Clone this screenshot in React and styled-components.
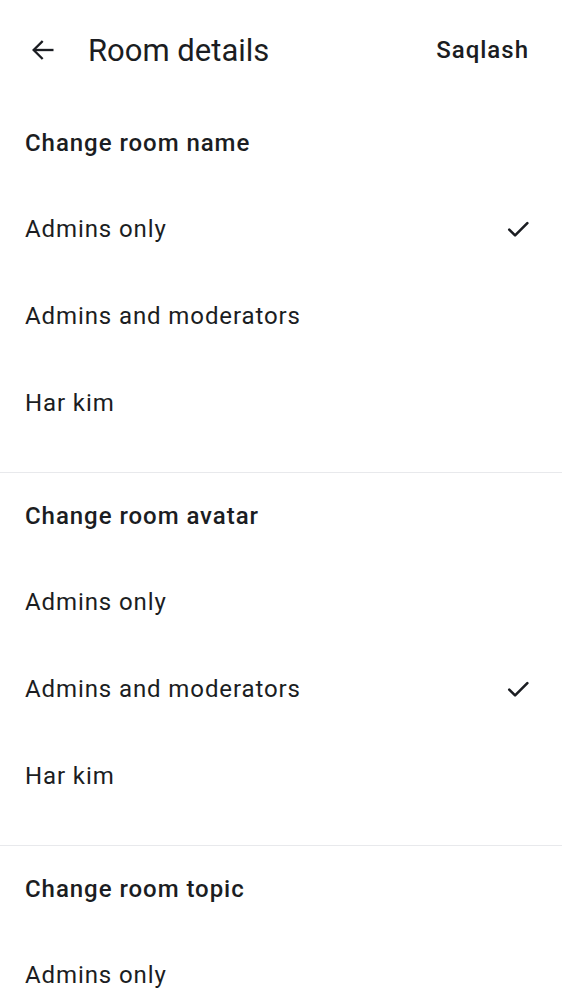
import React from "react";
import styled, { createGlobalStyle } from "styled-components";

const Global = createGlobalStyle`
  html, body { margin: 0; padding: 0; background: #ffffff; }
  body { font-family: Roboto, "Noto Sans", sans-serif; color: #1b1d22; }
`;

const Page = styled.div`
  width: 562px;
  height: 1000px;
  overflow: hidden;
  display: flex;
  flex-direction: column;
`;

const TopBar = styled.header`
  height: 100px;
  flex-shrink: 0;
  display: flex;
  align-items: center;
  padding: 0 33px 0 26px;
  box-sizing: border-box;
`;

const BackButton = styled.button`
  border: none;
  background: none;
  padding: 0;
  width: 34px;
  height: 34px;
  display: flex;
  align-items: center;
  justify-content: center;
  color: #1b1d22;
  margin-right: 28px;
`;

const Title = styled.h1`
  flex: 1;
  margin: 0;
  font-size: 31px;
  font-weight: 400;
  color: #1b1d22;
`;

const Action = styled.span`
  font-size: 24px;
  font-weight: 500;
  letter-spacing: 1px;
  color: #1b1d22;
`;

const Section = styled.section`
  display: flex;
  flex-direction: column;
  flex-shrink: 0;
  padding-bottom: 26px;
  border-bottom: 1px solid #e8e9ec;
`;

const SectionTitle = styled.h2`
  margin: 0;
  height: 85px;
  display: flex;
  align-items: center;
  padding: 0 25px;
  font-size: 24px;
  font-weight: 500;
  letter-spacing: 0.95px;
  color: #1b1d22;
`;

const Option = styled.div`
  height: 87px;
  flex-shrink: 0;
  display: flex;
  align-items: center;
  justify-content: space-between;
  padding: 0 30px 0 25px;
  font-size: 24px;
  font-weight: 400;
  letter-spacing: 0.9px;
  color: #1b1d22;
`;

const Arrow = () => (
  <svg width="28" height="28" viewBox="0 0 24 24" fill="none" stroke="currentColor" strokeWidth="2" strokeLinecap="square">
    <path d="M20 12H5" />
    <path d="M11 5l-7 7 7 7" />
  </svg>
);

const Check = () => (
  <svg width="28" height="28" viewBox="0 0 24 24" fill="none" stroke="#1b1d22" strokeWidth="2.2" strokeLinecap="round" strokeLinejoin="round">
    <path d="M4.5 12.5l5 5L20 7" />
  </svg>
);

const sections = [
  { title: "Change room name", selected: 0 },
  { title: "Change room avatar", selected: 1 },
  { title: "Change room topic", selected: -1 },
];
const options = ["Admins only", "Admins and moderators", "Har kim"];

export default function App() {
  return (
    <Page>
      <Global />
      <TopBar>
        <BackButton aria-label="Back"><Arrow /></BackButton>
        <Title>Room details</Title>
        <Action>Saqlash</Action>
      </TopBar>
      {sections.map((s) => (
        <Section key={s.title}>
          <SectionTitle>{s.title}</SectionTitle>
          {options.map((o, i) => (
            <Option key={o}>
              <span>{o}</span>
              {s.selected === i && <Check />}
            </Option>
          ))}
        </Section>
      ))}
    </Page>
  );
}
